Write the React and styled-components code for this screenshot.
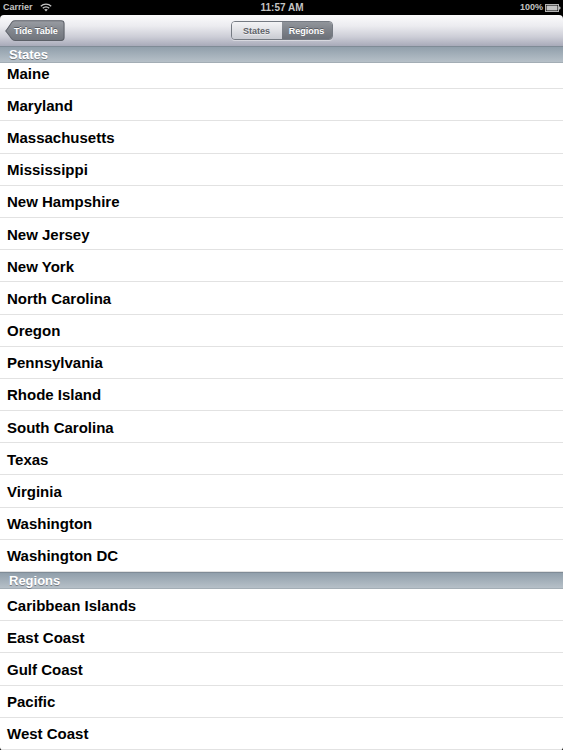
import { useState } from "react";
import styled, { createGlobalStyle } from "styled-components";

const GlobalStyle = createGlobalStyle`
  body {
    margin: 0;
    background: #000;
    font-family: "Liberation Sans", Arial, sans-serif;
  }

  button {
    font-family: inherit;
    margin: 0;
    cursor: pointer;
  }
`;

const Screen = styled.div`
  display: flex;
  flex-direction: column;
  min-height: 100vh;
  background: #000;
`;

const StatusBar = styled.header`
  display: grid;
  grid-template-columns: 1fr auto 1fr;
  align-items: center;
  height: 15px;
  padding: 0 2px 0 3px;
  color: #c4c4c4;
  font-size: 10px;
  font-weight: bold;
  line-height: 15px;
`;

const StatusGroup = styled.div`
  display: flex;
  align-items: center;
  justify-content: ${(props) => (props.$end ? "flex-end" : "flex-start")};
  gap: ${(props) => (props.$end ? "2px" : "7px")};
  font-size: 9px;
`;

const NavBar = styled.nav`
  display: grid;
  grid-template-columns: 1fr auto 1fr;
  align-items: center;
  box-sizing: border-box;
  height: 31px;
  padding: 0 5px;
  border-radius: 4px 4px 0 0;
  background: linear-gradient(#fbfbfc, #ececf0 35%, #cdced7 70%, #a8aab9);
`;

const BackButton = styled.button`
  position: relative;
  justify-self: start;
  height: 22px;
  padding: 0 7px 0 9px;
  border: none;
  background: none;
  color: #fff;
  font-size: 9px;
  font-weight: bold;
  text-shadow: 0 -1px 0 rgba(0, 0, 0, 0.35);
`;

const BackShape = styled.svg`
  position: absolute;
  inset: 0;
  width: 100%;
  height: 100%;
`;

const BackLabel = styled.span`
  position: relative;
`;

const Segments = styled.div`
  display: flex;
  box-sizing: border-box;
  height: 19px;
  border: 1px solid #757a82;
  border-radius: 4px;
  overflow: hidden;
  box-shadow: 0 1px 0 rgba(255, 255, 255, 0.4);
`;

const Segment = styled.button`
  width: 50px;
  padding: 0;
  border: none;
  font-size: 9px;
  font-weight: bold;
  color: ${(props) => (props.$active ? "#fff" : "#5f6369")};
  text-shadow: ${(props) =>
    props.$active ? "0 -1px 0 rgba(0, 0, 0, 0.35)" : "0 1px 0 rgba(255, 255, 255, 0.6)"};
  background: ${(props) =>
    props.$active
      ? "linear-gradient(#91959b, #7d8188 50%, #6c7078)"
      : "linear-gradient(#f3f3f5, #e0e1e5 50%, #c9cbd2)"};
`;

const Content = styled.main`
  display: flex;
  flex: 1;
  flex-direction: column;
  background: #fff;
  border-radius: 0 0 3px 3px;
  overflow: hidden;
`;

const Section = styled.section`
  display: flex;
  flex-direction: column;
  flex: ${(props) => props.$rows} 0 auto;
`;

const SectionTitle = styled.h2`
  position: sticky;
  top: 0;
  z-index: 1;
  box-sizing: border-box;
  height: 17px;
  margin: 0;
  padding: 0 9px;
  border-top: 1px solid #7f8b96;
  border-bottom: 1px solid #a3adb5;
  background: linear-gradient(#919fab, #b6c0c8);
  color: #fff;
  font-size: 13px;
  line-height: 16px;
  text-shadow: 0 1px 0 rgba(0, 0, 0, 0.35);
`;

const List = styled.ul`
  display: flex;
  flex: 1;
  flex-direction: column;
  margin: ${(props) => (props.$scrolled ? "-6px 0 0" : "0")};
  padding: 0;
  list-style: none;
`;

const Row = styled.li`
  display: flex;
  flex: 1 0 32px;
  box-sizing: border-box;
  border-bottom: 1px solid #e2e2e2;
`;

const RowButton = styled.button`
  flex: 1;
  padding: 1px 7px 0;
  border: none;
  background: none;
  color: #000;
  font-size: 15px;
  font-weight: bold;
  text-align: left;
`;

const sections = [
  {
    title: "States",
    scrolled: true,
    items: [
      "Maine",
      "Maryland",
      "Massachusetts",
      "Mississippi",
      "New Hampshire",
      "New Jersey",
      "New York",
      "North Carolina",
      "Oregon",
      "Pennsylvania",
      "Rhode Island",
      "South Carolina",
      "Texas",
      "Virginia",
      "Washington",
      "Washington DC",
    ],
  },
  {
    title: "Regions",
    items: ["Caribbean Islands", "East Coast", "Gulf Coast", "Pacific", "West Coast"],
  },
];

const WifiIcon = () => (
  <svg width="12" height="9" viewBox="0 0 12 9" fill="none" stroke="#c4c4c4" strokeWidth="1.3" aria-hidden="true">
    <path d="M0.8 3.3C3.7 0.4 8.3 0.4 11.2 3.3" />
    <path d="M2.8 5.3C4.6 3.5 7.4 3.5 9.2 5.3" />
    <path d="M4.2 6.6C5.2 5.7 6.8 5.7 7.8 6.6L6 8.5Z" fill="#c4c4c4" stroke="none" />
  </svg>
);

const BatteryIcon = () => (
  <svg width="16" height="8" viewBox="0 0 16 8" aria-hidden="true">
    <rect x="0.5" y="0.5" width="13" height="7" fill="none" stroke="#b4b4b4" />
    <rect x="1.5" y="1.5" width="11" height="5" fill="#c4c4c4" />
    <path d="M14 2.5h1l.7 1.5-.7 1.5h-1z" fill="#b4b4b4" />
  </svg>
);

const App = () => {
  const [active, setActive] = useState("Regions");

  return (
    <>
      <GlobalStyle />
      <Screen>
        <StatusBar>
          <StatusGroup>
            <span>Carrier</span>
            <WifiIcon />
          </StatusGroup>
          <span>11:57 AM</span>
          <StatusGroup $end>
            <span>100%</span>
            <BatteryIcon />
          </StatusGroup>
        </StatusBar>

        <NavBar>
          <BackButton type="button">
            <BackShape viewBox="0 0 59 22" preserveAspectRatio="none" aria-hidden="true">
              <defs>
                <linearGradient id="back" x1="0" y1="0" x2="0" y2="1">
                  <stop offset="0" stopColor="#9a9da3" />
                  <stop offset="0.5" stopColor="#82868d" />
                  <stop offset="1" stopColor="#70747c" />
                </linearGradient>
              </defs>
              <path
                d="M0.7 11C3.4 7.8 5 4.5 7 2Q8 .7 10 .7H55.5Q58.4 .7 58.4 3.6V17.6Q58.4 20.5 55.5 20.5H10Q8 20.5 7 19.2C5 16.8 3.4 14 .7 11Z"
                fill="url(#back)"
                stroke="#5b5f67"
              />
            </BackShape>
            <BackLabel>Tide Table</BackLabel>
          </BackButton>
          <Segments role="group" aria-label="Jump to section">
            {sections.map(({ title }) => (
              <Segment
                key={title}
                type="button"
                $active={active === title}
                aria-pressed={active === title}
                onClick={() => setActive(title)}
              >
                {title}
              </Segment>
            ))}
          </Segments>
        </NavBar>

        <Content>
          {sections.map(({ title, scrolled, items }) => (
            <Section key={title} $rows={items.length}>
              <SectionTitle>{title}</SectionTitle>
              <List $scrolled={scrolled}>
                {items.map((item) => (
                  <Row key={item}>
                    <RowButton type="button">{item}</RowButton>
                  </Row>
                ))}
              </List>
            </Section>
          ))}
        </Content>
      </Screen>
    </>
  );
};

export default App;
